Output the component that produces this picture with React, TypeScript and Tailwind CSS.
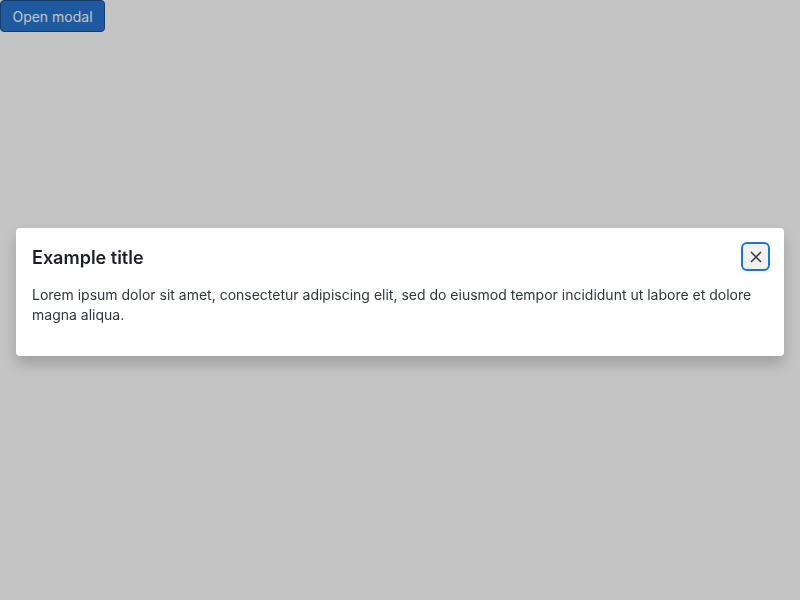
import { useState } from "react";

export default function App() {
  const [open, setOpen] = useState(true);

  return (
    <div className="min-h-screen bg-white font-['Inter',sans-serif]">
      <button
        onClick={() => setOpen(true)}
        className="h-[32px] w-[105px] rounded-[4px] border border-[#1d4f8a] bg-[#2776d0] text-[14px] text-white"
      >
        Open modal
      </button>

      {open && (
        <div className="fixed inset-0 z-10 flex items-center justify-center bg-black/[0.23]">
          <div className="mx-4 mb-4 w-full rounded-[4px] bg-white px-4 pt-4 pb-[31px] shadow-[0_8px_16px_rgba(0,0,0,0.2)]">
            <div className="flex items-center justify-between">
              <h2 className="text-[18px] font-semibold leading-[24px] text-[#1c2025]">Example title</h2>
              <button
                onClick={() => setOpen(false)}
                className="-mr-[2px] -mt-[2px] flex h-[29px] w-[29px] items-center justify-center rounded-[6px] border-2 border-[#1976d2] bg-[#f0f0f0] text-[#303740]"
              >
                <svg width="12" height="12" viewBox="0 0 12 12" fill="none" stroke="currentColor" strokeWidth="1.5">
                  <path d="M1 1L11 11M11 1L1 11" />
                </svg>
              </button>
            </div>
            <p className="mt-[14px] text-[14px] leading-[20px] text-[#303740]">
              Lorem ipsum dolor sit amet, consectetur adipiscing elit, sed do eiusmod tempor incididunt ut labore et
              dolore magna aliqua.
            </p>
          </div>
        </div>
      )}
    </div>
  );
}
